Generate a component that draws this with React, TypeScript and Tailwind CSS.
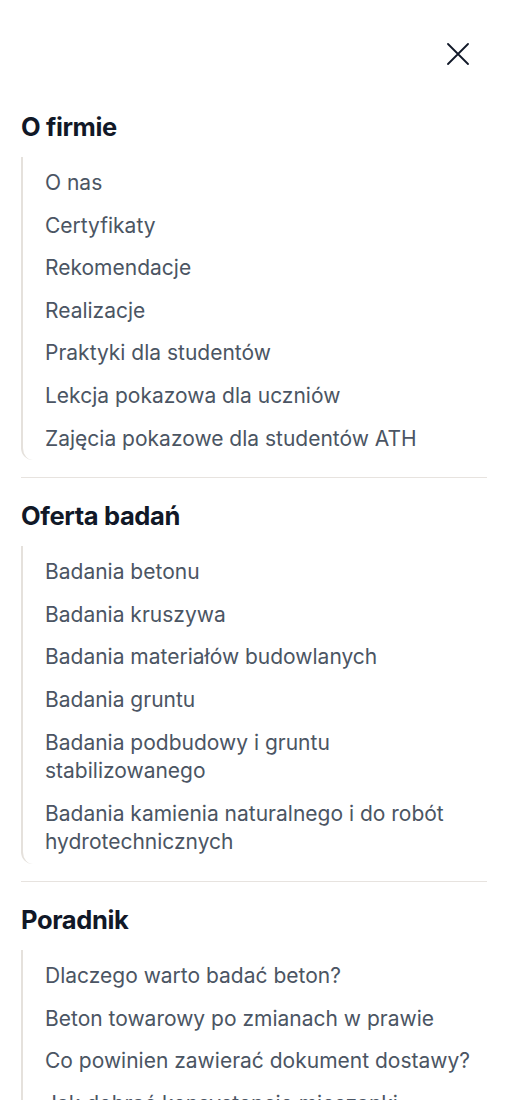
import React from 'react';

interface MenuSection {
    title: string;
    links: string[];
}

const sections: MenuSection[] = [
    {
        title: 'O firmie',
        links: [
            'O nas',
            'Certyfikaty',
            'Rekomendacje',
            'Realizacje',
            'Praktyki dla studentów',
            'Lekcja pokazowa dla uczniów',
            'Zajęcia pokazowe dla studentów ATH',
        ],
    },
    {
        title: 'Oferta badań',
        links: [
            'Badania betonu',
            'Badania kruszywa',
            'Badania materiałów budowlanych',
            'Badania gruntu',
            'Badania podbudowy i gruntu stabilizowanego',
            'Badania kamienia naturalnego i do robót hydrotechnicznych',
        ],
    },
    {
        title: 'Poradnik',
        links: [
            'Dlaczego warto badać beton?',
            'Beton towarowy po zmianach w prawie',
            'Co powinien zawierać dokument dostawy?',
            'Jak dobrać konsystencję mieszanki betonowej?',
            'Badanie betonu w konstrukcji',
        ],
    },
];

const App: React.FC = () => {
    return (
        <div className="min-h-screen bg-white px-[21px] font-['Inter',sans-serif]">
            <div className="flex justify-end pt-[43px] pr-[18px]">
                <button aria-label="Zamknij menu" className="text-gray-900">
                    <svg xmlns="http://www.w3.org/2000/svg" className="h-[22px] w-[22px]" viewBox="0 0 22 22" fill="none" stroke="currentColor" strokeWidth={1.8}>
                        <path strokeLinecap="round" d="M1 1l20 20M21 1L1 21" />
                    </svg>
                </button>
            </div>

            <nav className="mt-[46px]">
                {sections.map((section, index) => (
                    <div
                        key={section.title}
                        className={index < sections.length - 1 ? 'border-b border-[#e7e3df] pb-[17px] mb-[22px]' : ''}
                    >
                        <h2 className="text-[25.5px] leading-[32px] font-bold tracking-[-0.015em] text-[#111827]">{section.title}</h2>
                        <ul className="mt-[14px] border-l-2 border-[#e5e1dc] rounded-bl-xl pt-[5px] pl-[22px]">
                            {section.links.map(link => (
                                <li key={link} className="py-[7px] text-[21px] leading-[28.6px] text-[#4b5563]">
                                    {link}
                                </li>
                            ))}
                        </ul>
                    </div>
                ))}
            </nav>
        </div>
    );
};

export default App;
